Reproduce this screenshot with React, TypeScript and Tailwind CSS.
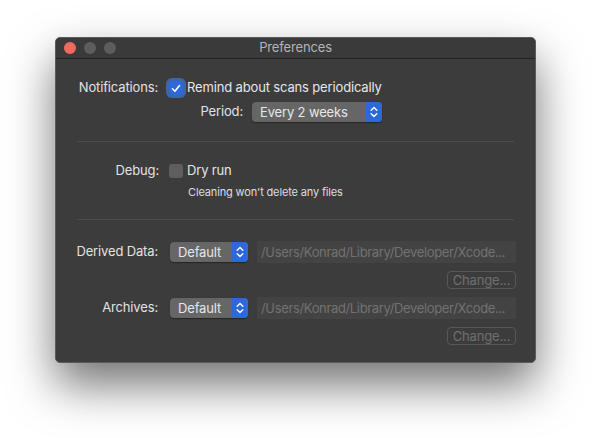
const Stepper = () => (
  <div className="w-[16px] h-full bg-[#2d68dc] rounded-r-[4px] flex items-center justify-center">
    <svg width="8" height="12" viewBox="0 0 8 12" fill="none" stroke="#ffffff" strokeWidth="1.4" strokeLinecap="round" strokeLinejoin="round">
      <path d="M1.2 4.3 L4 1.5 L6.8 4.3" />
      <path d="M1.2 7.7 L4 10.5 L6.8 7.7" />
    </svg>
  </div>
);

const Popup = ({ label, width }: { label: string; width: string }) => (
  <div className={`${width} h-[20px] flex rounded-[4px] bg-[#666666] shadow-[0_0.5px_1px_rgba(0,0,0,0.4)]`}>
    <div className="flex-1 pl-[8px] text-[13px] leading-[20px] text-[#e6e6e6]">{label}</div>
    <Stepper />
  </div>
);

const PathRow = ({ label }: { label: string }) => (
  <>
    <div className="flex items-center h-[22px]">
      <div className="w-[102px] text-right text-[13px] text-[#e2e2e2]">{label}</div>
      <div className="ml-[12px]">
        <Popup label="Default" width="w-[78px]" />
      </div>
      <div className="ml-[9px] w-[259px] h-[22px] bg-[#434343] pl-[4px] text-[13px] leading-[22px] tracking-[-0.35px] text-[#727272] whitespace-nowrap overflow-hidden">
        /Users/Konrad/Library/Developer/Xcode...
      </div>
    </div>
    <div className="flex justify-end pr-[19px] mt-[8px]">
      <div className="w-[69px] h-[18px] rounded-[4px] border border-[#575757] text-center text-[13px] leading-[16px] text-[#707070]">
        Change...
      </div>
    </div>
  </>
);

export default function App() {
  return (
    <div className="w-[592px] h-[438px] bg-white overflow-hidden tracking-[-0.15px]" style={{ fontFamily: "Inter, 'Noto Sans', sans-serif" }}>
      <div className="ml-[55px] mt-[37px] w-[481px] h-[326px] rounded-[5px] border border-[#5b5b5b] bg-[#3c3c3c] shadow-[0_22px_46px_rgba(0,0,0,0.55)] overflow-hidden flex flex-col">
        <div className="relative h-[21px] bg-[#3a3a3a] border-b border-[#242424] flex items-center pl-[8px] gap-[8px]">
          <div className="w-[12px] h-[12px] rounded-full bg-[#ee6a5f]" />
          <div className="w-[12px] h-[12px] rounded-full bg-[#5d5d5d]" />
          <div className="w-[12px] h-[12px] rounded-full bg-[#5d5d5d]" />
          <div className="absolute inset-0 flex items-center justify-center text-[13px] text-[#b4b4b4]">Preferences</div>
        </div>

        <div className="flex flex-col">
          <div className="flex items-center h-[20px] mt-[19px]">
            <div className="w-[102px] text-right text-[13px] text-[#e2e2e2]">Notifications:</div>
            <div className="ml-[11px] w-[14px] h-[14px] rounded-[3px] bg-[#2d68dc] ring-[3px] ring-[#3c66a8] flex items-center justify-center">
              <svg width="10" height="9" viewBox="0 0 10 9" fill="none" stroke="#ffffff" strokeWidth="1.6" strokeLinecap="round" strokeLinejoin="round">
                <path d="M1.5 4.8 L3.9 7.2 L8.5 1.5" />
              </svg>
            </div>
            <div className="ml-[4px] text-[13px] text-[#e6e6e6]">Remind about scans periodically</div>
          </div>

          <div className="flex items-center h-[20px] mt-[4px]">
            <div className="w-[187px] text-right text-[13px] text-[#e2e2e2]">Period:</div>
            <div className="ml-[9px]">
              <Popup label="Every 2 weeks" width="w-[130px]" />
            </div>
          </div>

          <div className="mx-[21px] mt-[19px] h-px bg-[#4d4d4d]" />

          <div className="flex items-center h-[20px] mt-[19px]">
            <div className="w-[103px] text-right text-[13px] text-[#e2e2e2]">Debug:</div>
            <div className="ml-[10px] w-[14px] h-[14px] rounded-[3px] bg-[#5e5e5e]" />
            <div className="ml-[4px] text-[13px] text-[#e6e6e6]">Dry run</div>
          </div>
          <div className="ml-[132px] mt-[4px] h-[14px] text-[11px] leading-[14px] text-[#dedede]">Cleaning won't delete any files</div>

          <div className="mx-[21px] mt-[20px] h-px bg-[#4d4d4d]" />

          <div className="mt-[21px]">
            <PathRow label="Derived Data:" />
          </div>
          <div className="mt-[8px]">
            <PathRow label="Archives:" />
          </div>
        </div>
      </div>
    </div>
  );
}
